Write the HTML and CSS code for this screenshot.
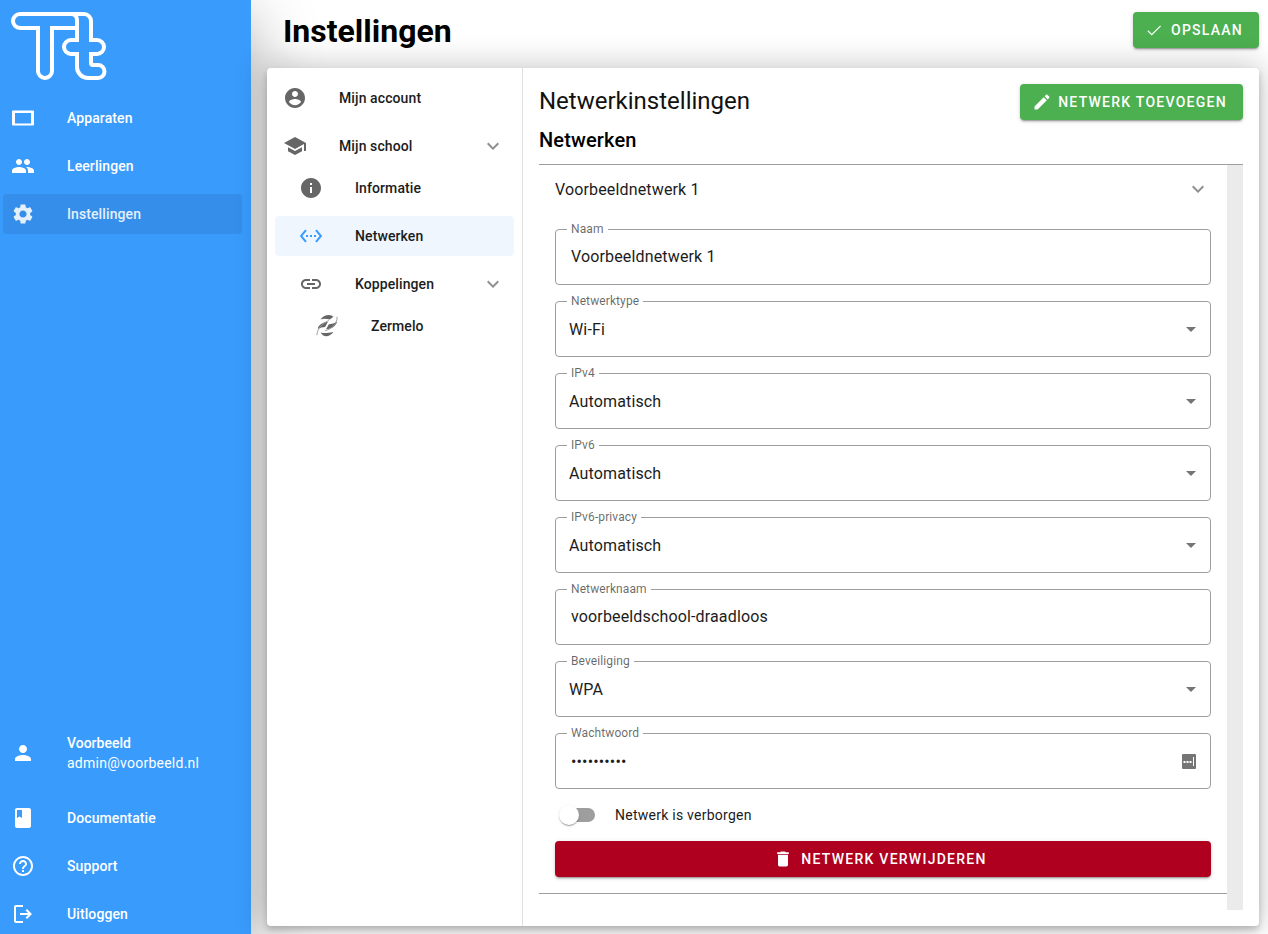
FILE: index.html
```html
<!DOCTYPE html>
<html lang="nl">
<head>
  <meta charset="UTF-8" />
  <meta name="viewport" content="width=device-width, initial-scale=1.0"/>
  <link rel="stylesheet" href="styles.css">
  <title>Instellingen</title>
</head>
<body>
  <div class="app">
    <!-- Zijbalk -->
    <aside class="sidebar">
      <div class="logo">
        <svg width="96" height="70" viewBox="11 11 96 70" fill="none" stroke="#fff" stroke-width="4">
          <path d="M20 14H84A7 7 0 0 1 91 21V40H97A7 7 0 0 1 97 54H91V63A2 2 0 0 0 93 65H98A6.500 6.500 0 0 1 98 78H88A11 11 0 0 1 77 67V54H71A7 7 0 0 1 71 40H77V28H52V71A7 7 0 0 1 38 71V28H20A7 7 0 0 1 20 14Z"/>
          <path d="M77 28V20A6 6 0 0 0 71 14"/>
        </svg>
      </div>
      <nav class="side-nav">
        <a class="side-item"><svg class="side-icon" viewBox="0 0 24 24"><path d="M2 4.500h20a1 1 0 0 1 1 1v13a1 1 0 0 1-1 1H2a1 1 0 0 1-1-1v-13a1 1 0 0 1 1-1zm2 2.500v10.500h16V7z"/></svg>Apparaten</a>
        <a class="side-item"><svg class="side-icon" viewBox="0 0 24 24"><path d="M16 11c1.660 0 2.990-1.340 2.990-3S17.660 5 16 5s-3 1.340-3 3 1.340 3 3 3zm-8 0c1.660 0 2.990-1.340 2.990-3S9.660 5 8 5 5 6.340 5 8s1.340 3 3 3zm0 2c-2.330 0-7 1.170-7 3.500V19h14v-2.500C15 14.170 10.330 13 8 13zm8 0c-.290 0-.620.020-.970.050 1.160.840 1.970 1.970 1.970 3.450V19h6v-2.500c0-2.330-4.670-3.500-7-3.500z"/></svg>Leerlingen</a>
        <a class="side-item active"><svg class="side-icon" viewBox="0 0 24 24"><path d="M19.140 12.940c.040-.300.060-.610.060-.940 0-.320-.020-.640-.070-.940l2.030-1.580c.180-.140.230-.410.120-.610l-1.920-3.320c-.120-.220-.370-.290-.590-.220l-2.390.960c-.500-.380-1.030-.700-1.620-.940l-.360-2.540c-.040-.240-.240-.410-.480-.410h-3.840c-.240 0-.430.170-.470.410l-.360 2.540c-.590.240-1.130.570-1.620.940l-2.390-.960c-.220-.080-.470 0-.590.220L2.740 8.870c-.120.210-.080.470.120.610l2.030 1.580c-.050.300-.090.630-.090.940s.020.640.070.940l-2.030 1.580c-.180.140-.230.410-.120.610l1.920 3.320c.120.220.370.290.590.220l2.390-.960c.500.380 1.030.700 1.620.940l.360 2.540c.050.240.240.410.480.410h3.840c.240 0 .440-.170.470-.410l.360-2.540c.590-.240 1.130-.560 1.620-.940l2.390.960c.220.080.470 0 .590-.220l1.920-3.320c.120-.220.070-.470-.120-.610l-2.010-1.580zM12 15.600c-1.980 0-3.600-1.620-3.600-3.600s1.620-3.600 3.600-3.600 3.600 1.620 3.600 3.600-1.620 3.600-3.600 3.600z"/></svg>Instellingen</a>
      </nav>
      <div class="side-bottom">
        <div class="side-user">
          <svg class="side-icon" viewBox="0 0 24 24"><path d="M12 12c2.210 0 4-1.790 4-4s-1.790-4-4-4-4 1.790-4 4 1.790 4 4 4zm0 2c-2.670 0-8 1.340-8 4v2h16v-2c0-2.660-5.330-4-8-4z"/></svg>
          <div>
            <div class="user-name">Voorbeeld</div>
            <div class="user-mail">admin@voorbeeld.nl</div>
          </div>
        </div>
        <a class="side-item"><svg class="side-icon" viewBox="0 0 24 24"><path d="M18 2H6c-1.100 0-2 .9-2 2v16c0 1.100.9 2 2 2h12c1.100 0 2-.9 2-2V4c0-1.100-.9-2-2-2zM6 4h5v8l-2.500-1.500L6 12V4z"/></svg>Documentatie</a>
        <a class="side-item"><svg class="side-icon" viewBox="0 0 24 24"><path d="M11 18h2v-2h-2v2zm1-16C6.480 2 2 6.480 2 12s4.480 10 10 10 10-4.480 10-10S17.520 2 12 2zm0 18c-4.410 0-8-3.590-8-8s3.590-8 8-8 8 3.590 8 8-3.590 8-8 8zm0-14c-2.210 0-4 1.790-4 4h2c0-1.100.9-2 2-2s2 .9 2 2c0 2-3 1.750-3 5h2c0-2.250 3-2.500 3-5 0-2.210-1.790-4-4-4z"/></svg>Support</a>
        <a class="side-item"><svg class="side-icon" viewBox="0 0 24 24"><path d="M5 21c-1.100 0-2-.9-2-2V5c0-1.100.9-2 2-2h7v2H5v14h7v2H5zm11-4-1.400-1.450L17.150 13H9v-2h8.150l-2.550-2.550L16 7l5 5-5 5z"/></svg>Uitloggen</a>
      </div>
    </aside>

    <main class="content">
      <header class="topbar">
        <h1 class="page-title">Instellingen</h1>
        <button class="btn btn-green btn-save" type="button">
          <svg class="btn-icon" viewBox="0 0 24 24"><path d="M3.800 13 9 18.200 20.800 6.400"/></svg>OPSLAAN
        </button>
      </header>

      <section class="card">
        <!-- Submenu -->
        <nav class="sub-nav">
          <a class="sub-item"><svg class="sub-icon" viewBox="0 0 24 24"><path d="M12 2C6.480 2 2 6.480 2 12s4.480 10 10 10 10-4.480 10-10S17.520 2 12 2zm0 3c1.660 0 3 1.340 3 3s-1.340 3-3 3-3-1.340-3-3 1.340-3 3-3zm0 14.200c-2.500 0-4.710-1.280-6-3.220.030-1.990 4-3.080 6-3.080 1.990 0 5.970 1.090 6 3.080-1.290 1.940-3.500 3.220-6 3.220z"/></svg>Mijn account</a>
          <a class="sub-item"><svg class="sub-icon" viewBox="0 0 24 24"><path d="M5 13.180v4L12 21l7-3.820v-4L12 17l-7-3.820zM12 3 1 9l11 6 9-4.910V17h2V9L12 3z"/></svg>Mijn school<svg class="chevron" viewBox="0 0 24 24"><path d="M7.410 8.590 12 13.170l4.590-4.580L18 10l-6 6-6-6z"/></svg></a>
          <a class="sub-item level-1 compact"><svg class="sub-icon" viewBox="0 0 24 24"><path d="M12 2C6.480 2 2 6.480 2 12s4.480 10 10 10 10-4.480 10-10S17.520 2 12 2zm1 15h-2v-6h2v6zm0-8h-2V7h2v2z"/></svg>Informatie</a>
          <a class="sub-item level-1 selected"><svg class="sub-icon" viewBox="0 0 24 24"><path d="M7.770 6.760 6.230 5.480.82 12l5.410 6.520 1.540-1.280L3.420 12l4.350-5.240zM7 13h2v-2H7v2zm10-2h-2v2h2v-2zm-6 2h2v-2h-2v2zm6.770-7.520-1.540 1.280L20.580 12l-4.350 5.240 1.540 1.280L23.180 12l-5.410-6.520z"/></svg>Netwerken</a>
          <a class="sub-item level-1"><svg class="sub-icon" viewBox="0 0 24 24"><path d="M3.900 12c0-1.710 1.390-3.100 3.100-3.100h4V7H7c-2.760 0-5 2.240-5 5s2.240 5 5 5h4v-1.900H7c-1.710 0-3.100-1.390-3.100-3.100zM8 13h8v-2H8v2zm9-6h-4v1.900h4c1.710 0 3.100 1.390 3.100 3.100s-1.390 3.100-3.100 3.100h-4V17h4c2.760 0 5-2.240 5-5s-2.240-5-5-5z"/></svg>Koppelingen<svg class="chevron" viewBox="0 0 24 24"><path d="M7.410 8.590 12 13.170l4.590-4.580L18 10l-6 6-6-6z"/></svg></a>
          <a class="sub-item level-2 compact">
            <svg class="sub-icon zermelo" viewBox="0 0 26 24">
              <path d="M6 5C8 1.500 12 0 15 0 17 0 19 1 20 2L16 5C12 4 9 4 6 5Z"/>
              <path d="M3 15C4 11 8 8 14 7.500L11 13C8 13 6 14 3 15Z"/>
              <path d="M24 7C23 11 19 15 12 15.500L15 10C18 10 21 9 24 7Z"/>
              <path d="M6 19C9 20 13 20 20 18.500 18 21.500 15 23 12 23 10 23 8 22 6 19Z"/>
              <path class="zermelo-line" d="M2 22C2.500 16 6 10 15 6"/>
              <path class="zermelo-line" d="M24 2C24 9 19 15 11 17"/>
            </svg>Zermelo</a>
        </nav>

        <!-- Netwerken -->
        <div class="pane">
          <div class="pane-head">
            <h2 class="pane-title">Netwerkinstellingen</h2>
            <button class="btn btn-green btn-add" type="button">
              <svg class="btn-icon-lg" viewBox="0 0 24 24"><path d="M3 17.250V21h3.750L17.810 9.940l-3.750-3.750L3 17.250zM20.710 7.040c.390-.390.390-1.020 0-1.410l-2.340-2.340c-.390-.390-1.020-.390-1.410 0l-1.830 1.830 3.750 3.750 1.830-1.830z"/></svg>NETWERK TOEVOEGEN
            </button>
          </div>
          <h3 class="pane-sub">Netwerken</h3>
          <div class="panel-wrap">
            <div class="panel">
              <div class="panel-head">Voorbeeldnetwerk 1<svg class="chevron" viewBox="0 0 24 24"><path d="M7.410 8.590 12 13.170l4.590-4.580L18 10l-6 6-6-6z"/></svg></div>
              <form class="panel-form">
                <div class="field"><label>Naam</label><input class="field-input" type="text" value="Voorbeeldnetwerk 1"></div>
                <div class="field"><label>Netwerktype</label><div class="field-select">Wi-Fi<span class="caret"></span></div></div>
                <div class="field"><label>IPv4</label><div class="field-select">Automatisch<span class="caret"></span></div></div>
                <div class="field"><label>IPv6</label><div class="field-select">Automatisch<span class="caret"></span></div></div>
                <div class="field"><label>IPv6-privacy</label><div class="field-select">Automatisch<span class="caret"></span></div></div>
                <div class="field"><label>Netwerknaam</label><input class="field-input" type="text" value="voorbeeldschool-draadloos"></div>
                <div class="field"><label>Beveiliging</label><div class="field-select">WPA<span class="caret"></span></div></div>
                <div class="field"><label>Wachtwoord</label><input class="field-input" type="password" value="geheim1234">
                  <svg class="pw-icon" viewBox="0 0 14 15"><path fill-rule="evenodd" d="M1 0H13A1 1 0 0 1 14 1V14A1 1 0 0 1 13 15H1A1 1 0 0 1 0 14V1A1 1 0 0 1 1 0ZM1.500 7V9H3.500V7ZM4.500 7V9H6.500V7ZM7.500 7V9H9.500V7ZM11 3V12H12V3Z"/></svg>
                </div>
                <div class="toggle-row"><span class="toggle"><span class="toggle-thumb"></span></span>Netwerk is verborgen</div>
                <button class="btn btn-red" type="button">
                  <svg class="btn-icon-lg" viewBox="0 0 24 24"><path d="M6 19c0 1.100.9 2 2 2h8c1.100 0 2-.9 2-2V7H6v12zM19 4h-3.500l-1-1h-5l-1 1H5v2h14V4z"/></svg>NETWERK VERWIJDEREN
                </button>
              </form>
            </div>
            <div class="scrollbar"></div>
          </div>
        </div>
      </section>
    </main>
  </div>
</body>
</html>
```

FILE: styles.css
```css
* {
  box-sizing: border-box;
}

html, body {
  margin: 0;
  padding: 0;
  height: 100%;
  overflow: hidden;
  background: #fff;
  font-family: 'Roboto', sans-serif;
  color: #1c1c1c;
}

:root {
  --blue: #399bfc;
  --green: #4caf50;
  --red: #b00020;
  --grey-icon: #666;
  --line: #9e9e9e;
}

.app {
  display: flex;
  height: 934px;
}

/* Zijbalk */
.sidebar {
  width: 251px;
  flex: none;
  background: var(--blue);
  color: #fff;
  display: flex;
  flex-direction: column;
  box-shadow: 0 20px 60px rgba(0, 0, 0, 0.35);
  position: relative;
  z-index: 1;
}

.logo {
  height: 94px;
  padding: 11px 0 0 11px;
}

.logo svg {
  display: block;
}

.side-nav {
  display: flex;
  flex-direction: column;
}

.side-item {
  display: flex;
  align-items: center;
  height: 48px;
  padding-left: 11px;
  font-size: 14px;
  font-weight: 500;
  letter-spacing: 0.1px;
}

.side-item.active {
  height: 40px;
  margin: 4px 9px 4px 3px;
  padding-left: 8px;
  border-radius: 4px;
  background: #358fea;
  color: #e4f0fc;
}

.side-item.active .side-icon {
  fill: #e4f0fc;
}

.side-icon {
  width: 24px;
  height: 24px;
  fill: #fff;
  flex: none;
  margin-right: 32px;
}

.side-bottom {
  margin-top: auto;
  margin-bottom: -4px;
  display: flex;
  flex-direction: column;
}

.side-user {
  display: flex;
  align-items: center;
  height: 60px;
  margin-bottom: 11px;
  padding-left: 11px;
  font-size: 14px;
}

.user-name {
  font-weight: 500;
  line-height: 20px;
}

.user-mail {
  line-height: 20px;
  letter-spacing: 0.25px;
}

/* Inhoud */
.content {
  flex: 1;
  min-width: 0;
  padding: 0 9px 8px 16px;
  display: flex;
  flex-direction: column;
}

.topbar {
  height: 68px;
  flex: none;
  display: flex;
  align-items: flex-start;
  justify-content: space-between;
  padding-top: 12px;
}

.page-title {
  margin: 0 0 0 16px;
  font-size: 32px;
  line-height: 38px;
  font-weight: 700;
  color: #000;
}

.btn {
  display: flex;
  align-items: center;
  justify-content: center;
  height: 36px;
  border: none;
  border-radius: 4px;
  color: #fff;
  font-family: inherit;
  font-size: 14px;
  font-weight: 500;
  letter-spacing: 1.25px;
  box-shadow: 0 3px 1px -2px rgba(0,0,0,.2), 0 2px 2px 0 rgba(0,0,0,.14), 0 1px 5px 0 rgba(0,0,0,.12);
}

.btn svg {
  fill: #fff;
}

.btn-green {
  background: var(--green);
  padding: 0 10px 0 6px;
}

.btn-save {
  width: 126px;
}

.btn .btn-icon {
  width: 18px;
  height: 18px;
  margin-right: 8px;
  fill: none;
  stroke: #fff;
  stroke-width: 1.6;
}

.btn-icon-lg {
  width: 20px;
  height: 20px;
  margin-right: 6px;
}

.btn-add {
  width: 223px;
}

.btn-red {
  background: var(--red);
  width: 100%;
  padding: 0 12px 0 6px;
}

.btn-red .btn-icon-lg {
  margin-right: 8px;
}

.card {
  flex: 1;
  min-height: 0;
  display: flex;
  background: #fff;
  border-radius: 4px;
  position: relative;
  z-index: 2;
  box-shadow: 0 0 30px 4px rgba(0, 0, 0, 0.2), 0 4px 6px rgba(0, 0, 0, 0.2);
}

.sub-nav {
  width: 256px;
  flex: none;
  border-right: 1px solid #e0e0e0;
  padding: 6px 8px 0;
}

.sub-item {
  display: flex;
  align-items: center;
  height: 48px;
  padding-left: 8px;
  font-size: 14px;
  font-weight: 500;
  letter-spacing: 0.1px;
}

.sub-icon {
  width: 24px;
  height: 24px;
  flex: none;
  fill: var(--grey-icon);
  margin-right: 32px;
}

.zermelo-line {
  fill: none;
  stroke: #999;
  stroke-width: 1;
}

.level-1 {
  padding-left: 24px;
}

.level-2 {
  padding-left: 40px;
}

.compact {
  height: 36px;
}

.selected {
  height: 40px;
  margin: 10px 0 4px;
  border-radius: 4px;
  background: #eff6fe;
}

.selected .sub-icon {
  fill: var(--blue);
}

.sub-item .chevron {
  margin: 0 9px 0 auto;
}

.chevron {
  width: 24px;
  height: 24px;
  fill: #909090;
  flex: none;
}

.pane {
  flex: 1;
  min-width: 0;
  padding: 16px 16px 0;
}

.pane-head {
  display: flex;
  justify-content: space-between;
  align-items: flex-start;
  height: 36px;
}

.pane-title {
  margin: 3px 0 0;
  font-size: 24px;
  line-height: 28px;
  font-weight: 400;
  color: #111;
}

.pane-sub {
  margin: 8px 0 0;
  font-size: 20px;
  line-height: 24px;
  font-weight: 500;
  letter-spacing: 0.15px;
  color: #000;
  padding-bottom: 12px;
  border-bottom: 1px solid var(--line);
}

.panel-wrap {
  display: flex;
  height: 745px;
}

.scrollbar {
  width: 16px;
  flex: none;
  background: #ebebeb;
}

.panel {
  flex: 1;
  min-width: 0;
  align-self: flex-start;
  border-bottom: 1px solid var(--line);
  padding-bottom: 16px;
}

.panel-head {
  display: flex;
  align-items: center;
  justify-content: space-between;
  height: 48px;
  padding: 0 17px 0 16px;
  font-size: 16px;
  letter-spacing: 0.15px;
  margin-bottom: 16px;
}

.panel-form {
  display: flex;
  flex-direction: column;
  gap: 16px;
  padding: 0 16px;
}

.field {
  position: relative;
  height: 56px;
  border: 1px solid var(--line);
  border-radius: 4px;
  display: flex;
  align-items: center;
}

.field label {
  position: absolute;
  top: -8px;
  left: 11px;
  padding: 0 4px;
  background: #fff;
  font-size: 12px;
  line-height: 14px;
  letter-spacing: 0.1px;
  color: rgba(0, 0, 0, 0.6);
}

.field-input {
  flex: 1;
  min-width: 0;
  border: none;
  outline: none;
  background: none;
  padding: 0 15px;
  font-family: inherit;
  font-size: 16px;
  letter-spacing: 0.15px;
  color: #1c1c1c;
}

.field-input[type="text"] {
  padding-bottom: 2px;
}

.field-select {
  flex: 1;
  display: flex;
  align-items: center;
  justify-content: space-between;
  padding: 0 14px 0 13px;
  font-size: 16px;
  letter-spacing: 0.15px;
}

.caret {
  width: 0;
  height: 0;
  border-left: 5px solid transparent;
  border-right: 5px solid transparent;
  border-top: 5px solid #757575;
}

.pw-icon {
  width: 14px;
  height: 15px;
  flex: none;
  margin-right: 14px;
  fill: #757575;
}

.toggle-row {
  display: flex;
  align-items: center;
  height: 20px;
  padding-left: 5px;
  font-size: 14px;
  letter-spacing: 0.25px;
}

.toggle {
  position: relative;
  width: 35px;
  height: 14px;
  margin-right: 20px;
  border-radius: 7px;
  background: #9e9e9e;
}

.toggle-thumb {
  position: absolute;
  left: -1px;
  top: -3px;
  width: 20px;
  height: 20px;
  border-radius: 50%;
  background: #fff;
  box-shadow: 0 2px 1px -1px rgba(0,0,0,.2), 0 1px 1px 0 rgba(0,0,0,.14), 0 1px 3px 0 rgba(0,0,0,.12);
}
```
